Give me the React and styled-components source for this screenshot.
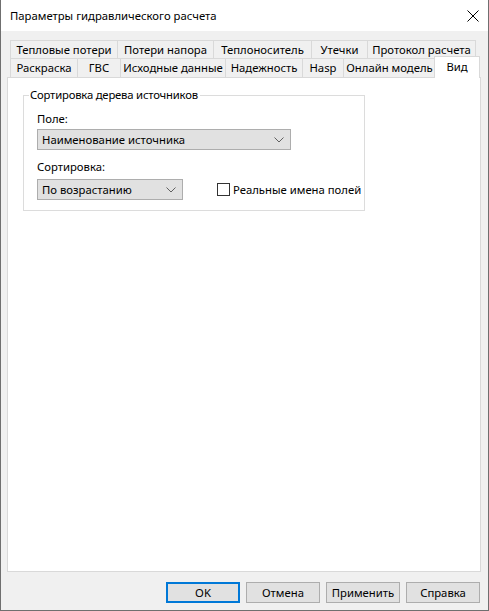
import styled, { createGlobalStyle } from 'styled-components';

const Global = createGlobalStyle`
  html, body {
    margin : 0;
    padding : 0;
    background : #f0f0f0;
  }
  * {
    box-sizing : border-box;
  }
`

const Window = styled.div`
  width : 489px;
  height : 611px;
  display : flex;
  flex-direction : column;
  background : #f0f0f0;
  border : 1px solid #6f6f6f;
  border-top : none;
  font-family : "Noto Sans", "Liberation Sans", sans-serif;
  font-size : 11.3px;
  color : #000;
`

const TitleBar = styled.div`
  height : 31px;
  flex : none;
  background : #fff;
  display : flex;
  align-items : center;
  justify-content : space-between;
  padding : 0 9px 0 9px;
`

const Body = styled.div`
  flex : 1;
  display : flex;
  flex-direction : column;
  padding : 9px 7px 0 6px;
`

const TabRow = styled.div`
  display : flex;
  align-items : flex-end;
  padding-left : 3px;
  height : ${props => props.h}px;
  position : relative;
  z-index : ${props => props.z || 0};
`

const Tab = styled.div`
  width : ${props => props.w}px;
  flex : none;
  height : 100%;
  margin-right : -1px;
  border : 1px solid #d9d9d9;
  border-bottom : none;
  background : #f0f0f0;
  display : flex;
  align-items : center;
  justify-content : center;
  white-space : nowrap;
  line-height : 16px;
`

const ActiveTab = styled(Tab)`
  height : 22px;
  margin-top : -3px;
  margin-bottom : -1px;
  margin-left : -1px;
  background : #fff;
  align-items : flex-start;
  padding-top : 2px;
  position : relative;
  z-index : 2;
`

const Panel = styled.div`
  height : 495px;
  background : #fff;
  border : 1px solid #d9d9d9;
  padding : 17px 0 0 15px;
`

const GroupBox = styled.div`
  position : relative;
  width : 342px;
  height : 116px;
  border : 1px solid #dcdcdc;
  padding : 15px 0 0 13px;
`

const Legend = styled.span`
  position : absolute;
  top : -9px;
  left : 5px;
  padding : 0 2px 0 1px;
  background : #fff;
  line-height : 16px;
  white-space : nowrap;
  letter-spacing : -0.2px;
`

const Label = styled.div`
  line-height : 16px;
  margin-top : ${props => props.mt || 0}px;
`

const FieldRow = styled.div`
  display : flex;
  align-items : center;
  margin-top : ${props => props.mt || 0}px;
`

const Combo = styled.div`
  width : ${props => props.w}px;
  flex : none;
  height : 21px;
  background : #e1e1e1;
  border : 1px solid #adadad;
  display : flex;
  align-items : center;
  justify-content : space-between;
  padding : 0 6px 0 4px;
  white-space : nowrap;
`

const CheckLabel = styled.label`
  display : flex;
  align-items : center;
  margin-left : 34px;
  white-space : nowrap;
`

const Box = styled.span`
  width : 13px;
  height : 13px;
  flex : none;
  border : 1px solid #333;
  background : #fff;
  margin-right : 3px;
`

const Footer = styled.div`
  flex : 1;
  display : flex;
  justify-content : flex-end;
  align-items : flex-start;
  gap : 6px;
  padding : 10px 1px 0 0;
`

const Button = styled.button`
  width : 74px;
  height : 21px;
  background : #e1e1e1;
  border : ${props => props.primary ? '2px solid #0078d7' : '1px solid #adadad'};
  font-family : inherit;
  font-size : 11.3px;
  color : #000;
  padding : 0;
`

const Chevron = () => (
  <svg width="10" height="6" viewBox="0 0 10 6">
    <path d="M0.5 0.5 L5 5 L9.5 0.5" fill="none" stroke="#606060" strokeWidth="1" />
  </svg>
)

const Close = () => (
  <svg width="12" height="12" viewBox="0 0 12 12">
    <path d="M0.5 0.5 L11.5 11.5 M11.5 0.5 L0.5 11.5" stroke="#000" strokeWidth="1" />
  </svg>
)

const topTabs = [
  ['Тепловые потери', 108],
  ['Потери напора', 97],
  ['Теплоноситель', 99],
  ['Утечки', 57],
  ['Протокол расчета', 109],
]

const bottomTabs = [
  ['Раскраска', 68],
  ['ГВС', 44],
  ['Исходные данные', 106],
  ['Надежность', 78],
  ['Hasp', 42],
  ['Онлайн модель', 93],
]

function App() {
  return (
    <Window>
      <Global />
      <TitleBar>
        <span>Параметры гидравлического расчета</span>
        <Close />
      </TitleBar>
      <Body>
        <TabRow h={18}>
          {topTabs.map(([t, w]) => <Tab key={t} w={w}>{t}</Tab>)}
        </TabRow>
        <TabRow h={19} z={1}>
          {bottomTabs.map(([t, w]) => <Tab key={t} w={w}>{t}</Tab>)}
          <ActiveTab w={46}>Вид</ActiveTab>
        </TabRow>
        <Panel>
          <GroupBox>
            <Legend>Сортировка дерева источников</Legend>
            <Label>Поле:</Label>
            <FieldRow mt={2}>
              <Combo w={254}>Наименование источника<Chevron /></Combo>
            </FieldRow>
            <Label mt={9}>Сортировка:</Label>
            <FieldRow mt={4}>
              <Combo w={146}>По возрастанию<Chevron /></Combo>
              <CheckLabel><Box />Реальные имена полей</CheckLabel>
            </FieldRow>
          </GroupBox>
        </Panel>
        <Footer>
          <Button primary>OK</Button>
          <Button>Отмена</Button>
          <Button>Применить</Button>
          <Button>Справка</Button>
        </Footer>
      </Body>
    </Window>
  )
}

export default App
